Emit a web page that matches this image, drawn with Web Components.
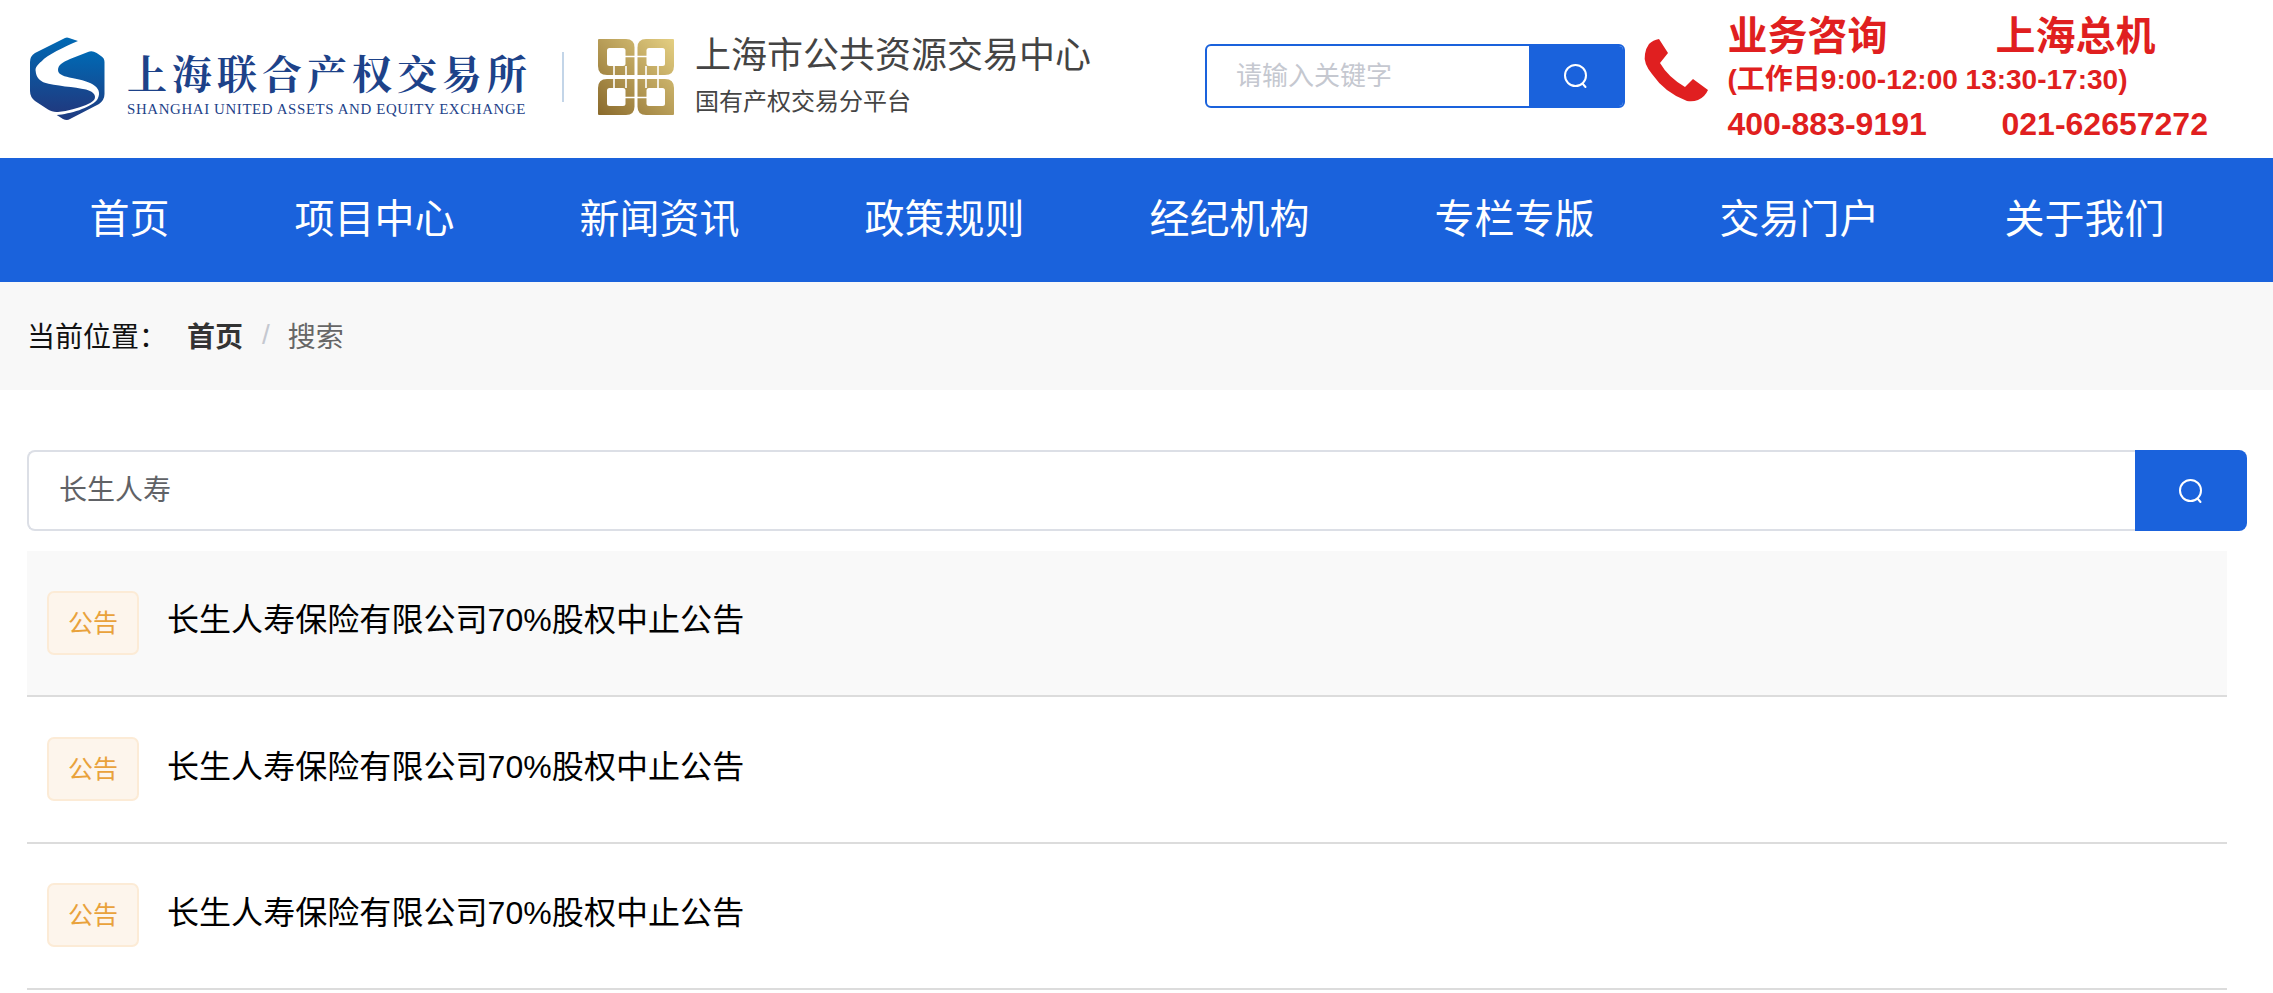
<!DOCTYPE html>
<html lang="zh">
<head>
<meta charset="utf-8">
<title>搜索</title>
<style>
  html, body { margin: 0; padding: 0; background: #fff; }
  body { font-family: "Liberation Sans", "Noto Sans CJK SC", sans-serif; }
</style>
</head>
<body>
<site-header></site-header>
<site-nav></site-nav>
<bread-crumb></bread-crumb>
<search-page>
  <result-row>长生人寿保险有限公司70%股权中止公告</result-row>
  <result-row>长生人寿保险有限公司70%股权中止公告</result-row>
  <result-row>长生人寿保险有限公司70%股权中止公告</result-row>
</search-page>

<script>
const FONT = '"Liberation Sans", "Noto Sans CJK SC", sans-serif';
const SEARCH_ICON = `<svg viewBox="0 0 26 26" fill="none" stroke="#fff" stroke-width="2"><circle cx="12.5" cy="12.5" r="10.5"/><path d="M19.5 20.5l3 3.5" stroke-linecap="round"/></svg>`;

class SiteHeader extends HTMLElement {
    constructor() {
        super();
        this.attachShadow({ mode: 'open' });
        this.shadowRoot.innerHTML = `
            <style>
                :host { display: flex; align-items: flex-start; height: 158px; font-family: ${FONT}; background: #fff; }
                .logo-mark { width: 76px; height: 86px; margin: 37px 0 0 30px; flex: none; }
                .brand { width: 402px; margin: 49px 0 0 21px; flex: none; color: #1d4289; }
                .brand-cn { font-family: "Noto Serif CJK SC", "Noto Sans CJK SC", sans-serif; font-size: 40px; line-height: 46px; font-weight: 700; letter-spacing: 5px; white-space: nowrap; }
                .brand-en { font-family: "Liberation Serif", serif; font-size: 14.9px; line-height: 16px; margin-top: 6px; letter-spacing: .62px; white-space: nowrap; }
                .rule { width: 2px; height: 50px; margin: 52px 0 0 33px; background: #c3d5e8; flex: none; }
                .gold { width: 76px; height: 76px; margin: 39px 0 0 34px; flex: none; }
                .centre { margin: 33px 0 0 21px; width: 510px; flex: none; color: #444; }
                .centre-cn { font-size: 36px; line-height: 46px; white-space: nowrap; }
                .centre-sub { font-size: 24px; line-height: 32px; margin-top: 7px; white-space: nowrap; }
                .search { display: flex; width: 420px; height: 64px; margin: 44px 0 0 0; box-sizing: border-box; border: 2px solid #1a62dc; border-radius: 6px; overflow: hidden; flex: none; }
                .search .ph { flex: 1; padding-left: 29px; font-size: 26px; line-height: 60px; color: #c5c8d0; }
                .search .btn { width: 94px; background: #1a62dc; display: flex; align-items: center; justify-content: center; }
                .search svg { width: 26px; height: 26px; }
                .phone { width: 85px; height: 80px; margin: 30px 0 0 10px; flex: none; }
                .contact { margin: 11px 0 0 7.5px; color: #e01f20; font-weight: 700; white-space: nowrap; }
                .c1 { font-size: 40px; line-height: 50px; display: flex; }
                .c1 span:first-child { width: 268px; }
                .c2 { font-size: 28px; line-height: 36px; margin-top: 1px; }
                .c3 { font-size: 32px; line-height: 40px; margin-top: 6px; display: flex; }
                .c3 span:first-child { width: 274px; }
            </style>
            <svg class="logo-mark" viewBox="0 0 76 86">
                <defs><linearGradient id="lg" x1="0" y1="0" x2="0" y2="1"><stop offset="0" stop-color="#0069b4"/><stop offset="1" stop-color="#1f3a80"/></linearGradient></defs>
                <path fill="url(#lg)" d="M35 1Q37 0 39 1L48 4C34 10 17 18 11.7 24.3C7 28 5 31 5.7 34.3C6 40 10 44 14 45.5C25 49 45 50 56 52.5C62 54 65 57 65 60C65 64 60 66 56 68C48 71 38 74 28 75C24 75.5 21 74 18 72.5L5 64Q0 60 0 54V25Q0 19 5 16Z"/>
                <path fill="url(#lg)" d="M58 15Q62 13 66.7 16L71 19Q74.5 21 74.5 25V57Q74.5 63 69 67L40 82Q37 84 33 82L26.7 78C40 77 60 71 67 63C70 58 70 53 65 49C60 45 52 43 42 41C35 39.5 28 38 28 33C28 28 33 25 40 22Z"/>
            </svg>
            <div class="brand">
                <div class="brand-cn">上海联合产权交易所</div>
                <div class="brand-en">SHANGHAI UNITED ASSETS AND EQUITY EXCHANGE</div>
            </div>
            <div class="rule"></div>
            <svg class="gold" viewBox="0 0 76 76">
                <defs>
                    <linearGradient id="gg" x1="0" y1="1" x2="1" y2="0"><stop offset="0" stop-color="#8a6a2c"/><stop offset="1" stop-color="#e4cf82"/></linearGradient>
                    <mask id="gm" maskUnits="userSpaceOnUse" x="0" y="0" width="76" height="76">
                        <g id="gq">
                            <path fill="#fff" d="M1 0H28Q36.5 0 36.5 8.5V36H9Q0 36 0 27V1Q0 0 1 0Z"/>
                            <rect x="9" y="9" width="18.5" height="18" rx="2.5" fill="#000"/>
                            <path stroke="#000" stroke-width="1.6" fill="none" d="M27 17.5H37M16 27V36M28 27V36"/>
                        </g>
                        <use href="#gq" transform="matrix(-1 0 0 1 76 0)"/>
                        <use href="#gq" transform="matrix(1 0 0 -1 0 76)"/>
                        <use href="#gq" transform="matrix(-1 0 0 -1 76 76)"/>
                    </mask>
                </defs>
                <rect width="76" height="76" fill="url(#gg)" mask="url(#gm)"/>
            </svg>
            <div class="centre">
                <div class="centre-cn">上海市公共资源交易中心</div>
                <div class="centre-sub">国有产权交易分平台</div>
            </div>
            <div class="search">
                <div class="ph">请输入关键字</div>
                <div class="btn">${SEARCH_ICON}</div>
            </div>
            <svg class="phone" viewBox="0 0 85 80">
                <path fill="#e01f20" d="M14 14Q18 10 24 9L33 23L25 33Q33 47 50 57L58 49L73 60Q70 67 63 70Q58 72 52 71Q30 63 17 44Q8 33 10 24Q11 18 14 14Z"/>
            </svg>
            <div class="contact">
                <div class="c1"><span>业务咨询</span><span>上海总机</span></div>
                <div class="c2">(工作日9:00-12:00 13:30-17:30)</div>
                <div class="c3"><span>400-883-9191</span><span>021-62657272</span></div>
            </div>
        `;
    }
}

class SiteNav extends HTMLElement {
    constructor() {
        super();
        this.attachShadow({ mode: 'open' });
        const items = ['首页', '项目中心', '新闻资讯', '政策规则', '经纪机构', '专栏专版', '交易门户', '关于我们'];
        this.shadowRoot.innerHTML = `
            <style>
                :host { display: flex; height: 124px; padding-left: 89.5px; gap: 125px; box-sizing: border-box; background: #1a62dc; font-family: ${FONT}; }
                a { display: block; font-size: 40px; line-height: 122px; color: #fff; white-space: nowrap; }
            </style>
            ${items.map(t => `<a>${t}</a>`).join('')}
        `;
    }
}

class BreadCrumb extends HTMLElement {
    constructor() {
        super();
        this.attachShadow({ mode: 'open' });
        this.shadowRoot.innerHTML = `
            <style>
                :host { display: flex; align-items: center; height: 108px; padding: 0 0 2px 27px; box-sizing: border-box; background: #f8f8f8; font-family: ${FONT}; font-size: 28px; color: #111; }
                .label { width: 160px; }
                b { color: #333; }
                i { font-style: normal; color: #c5c8d0; margin: 0 18px 0 19px; }
                span.cur { color: #666; }
            </style>
            <span class="label">当前位置：</span><b>首页</b><i>/</i><span class="cur">搜索</span>
        `;
    }
}

class SearchPage extends HTMLElement {
    constructor() {
        super();
        this.attachShadow({ mode: 'open' });
        this.shadowRoot.innerHTML = `
            <style>
                :host { display: block; padding: 60px 0 0 27px; font-family: ${FONT}; }
                .bar { display: flex; width: 2220px; height: 81px; }
                .field { flex: 1; box-sizing: border-box; border: 2px solid #dcdfe6; border-right: 0; border-radius: 8px 0 0 8px; padding-left: 30px; font-size: 28px; line-height: 77px; color: #606266; }
                .btn { width: 112px; background: #1a62dc; border-radius: 0 8px 8px 0; display: flex; align-items: center; justify-content: center; }
                .btn svg { width: 26px; height: 26px; }
                .list { width: 2200px; margin-top: 20px; }
                ::slotted(result-row:first-child) { background: #f9f9f9; }
            </style>
            <div class="bar">
                <div class="field">长生人寿</div>
                <div class="btn">${SEARCH_ICON}</div>
            </div>
            <div class="list"><slot></slot></div>
        `;
    }
}

class ResultRow extends HTMLElement {
    constructor() {
        super();
        this.attachShadow({ mode: 'open' });
        this.shadowRoot.innerHTML = `
            <style>
                :host { display: flex; align-items: center; height: 146.4px; box-sizing: border-box; padding: 0 0 12px 20px; border-bottom: 2px solid #dcdcdc; font-family: ${FONT}; font-size: 32px; letter-spacing: .06px; color: #000; }
                .tag { width: 92px; height: 64px; box-sizing: border-box; margin: 11px 28px 0 0; border: 2px solid #fcebd6; border-radius: 7px; background: #fdf5ec; color: #e9a23b; font-size: 25px; line-height: 60px; text-align: center; flex: none; }
            </style>
            <span class="tag">公告</span><slot></slot>
        `;
    }
}

customElements.define('site-header', SiteHeader);
customElements.define('site-nav', SiteNav);
customElements.define('bread-crumb', BreadCrumb);
customElements.define('search-page', SearchPage);
customElements.define('result-row', ResultRow);
</script>
</body>
</html>
